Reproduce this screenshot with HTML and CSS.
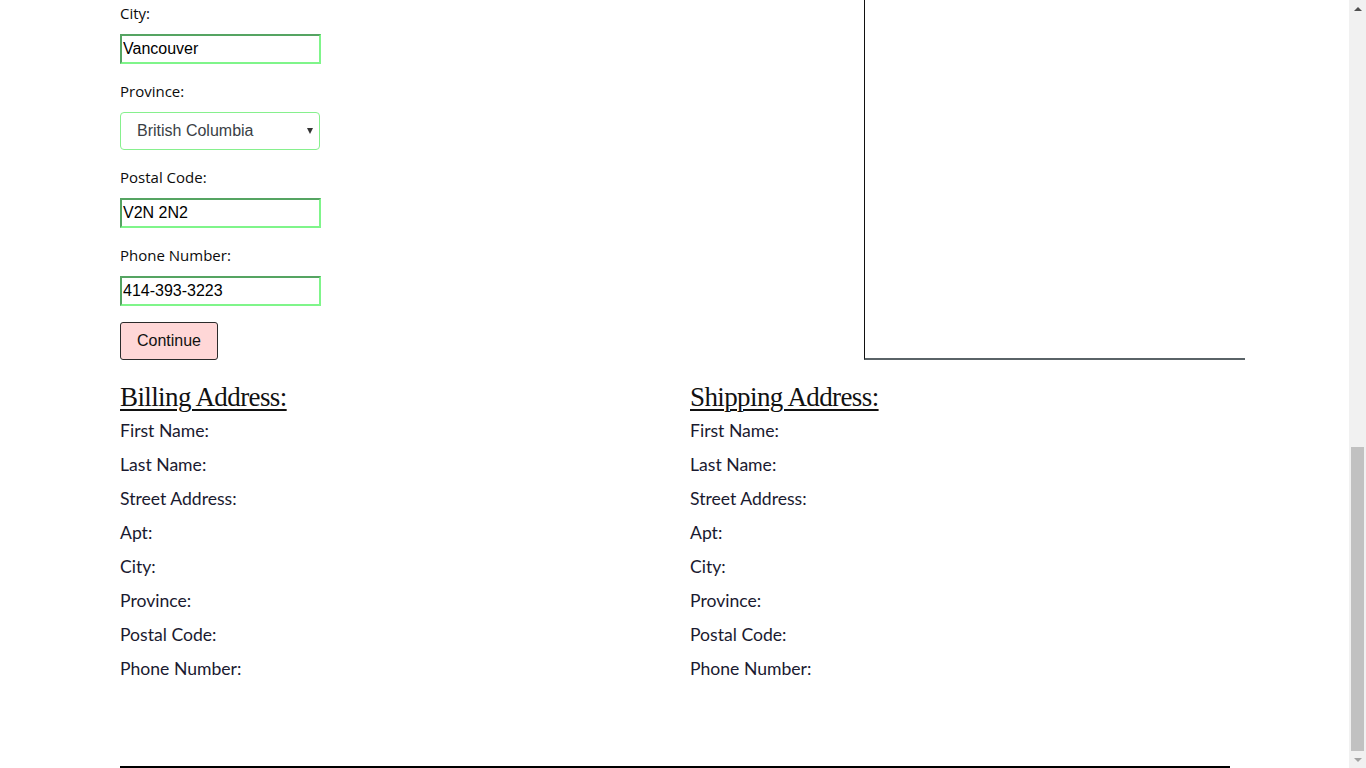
FILE: index.html
```html
<!DOCTYPE html>
<html lang="en">
<head>
<meta charset="utf-8">
<title>Checkout</title>
<link rel="stylesheet" href="styles.css">
</head>
<body>
<div class="window">
  <div class="page">
    <div class="top">
      <form class="form">
        <label class="field-label" for="city">City:</label>
        <input class="text-input" id="city" type="text" value="Vancouver">

        <label class="field-label" for="province">Province:</label>
        <span class="select-wrap">
          <select class="select" id="province">
            <option>British Columbia</option>
          </select>
        </span>

        <label class="field-label" for="postal">Postal Code:</label>
        <input class="text-input" id="postal" type="text" value="V2N 2N2">

        <label class="field-label" for="phone">Phone Number:</label>
        <input class="text-input" id="phone" type="text" value="414-393-3223">

        <button class="continue" type="button">Continue</button>
      </form>
      <div class="preview-box"></div>
    </div>

    <div class="addresses">
      <section class="address">
        <h2 class="address-title">Billing Address:</h2>
        <p class="address-row">First Name:</p>
        <p class="address-row">Last Name:</p>
        <p class="address-row">Street Address:</p>
        <p class="address-row">Apt:</p>
        <p class="address-row">City:</p>
        <p class="address-row">Province:</p>
        <p class="address-row">Postal Code:</p>
        <p class="address-row">Phone Number:</p>
      </section>
      <section class="address">
        <h2 class="address-title">Shipping Address:</h2>
        <p class="address-row">First Name:</p>
        <p class="address-row">Last Name:</p>
        <p class="address-row">Street Address:</p>
        <p class="address-row">Apt:</p>
        <p class="address-row">City:</p>
        <p class="address-row">Province:</p>
        <p class="address-row">Postal Code:</p>
        <p class="address-row">Phone Number:</p>
      </section>
    </div>

    <div class="rule"></div>
  </div>

  <div class="scrollbar" aria-hidden="true">
    <div class="sb-btn sb-up"><span class="tri-up"></span></div>
    <div class="sb-track">
      <div class="sb-thumb"></div>
    </div>
    <div class="sb-btn sb-down"><span class="tri-down"></span></div>
  </div>
</div>
</body>
</html>
```

FILE: styles.css
```css
html, body {
  margin: 0;
  padding: 0;
  height: 100%;
  overflow: hidden;
  background: #ffffff;
}

.window {
  display: flex;
  height: 768px;
  width: 1366px;
}

.page {
  width: 1349px;
  min-width: 0;
  flex-shrink: 0;
  padding-left: 120px;
  box-sizing: border-box;
  display: flex;
  flex-direction: column;
  overflow: hidden;
}

.top {
  display: flex;
  align-items: flex-start;
}

.form {
  width: 744px;
  flex-shrink: 0;
  padding-top: 3px;
  display: flex;
  flex-direction: column;
  align-items: flex-start;
}

.field-label {
  display: block;
  font-family: "Open Sans", "Noto Sans", sans-serif;
  font-size: 15px;
  line-height: 20px;
  color: #0c0c0c;
  margin-bottom: 11px;
  padding-top: 1px;
  margin-top: -1px;
}

.text-input {
  box-sizing: border-box;
  width: 201px;
  height: 30px;
  margin: 0 0 17px 0;
  padding: 0 1px;
  border-width: 2px;
  border-style: solid;
  border-color: #55a462 #7ff58a #7ff58a #55a462;
  font-family: "Liberation Sans", Arial, sans-serif;
  font-size: 16px;
  color: #000;
  background: #fff;
  outline: none;
}

.select-wrap {
  position: relative;
  display: block;
  width: 200px;
  height: 38px;
  margin-bottom: 17px;
}

.select-wrap::after {
  content: "";
  position: absolute;
  right: 7px;
  top: 16px;
  border-left: 3px solid transparent;
  border-right: 3px solid transparent;
  border-top: 6px solid #333;
  pointer-events: none;
}

.select {
  appearance: none;
  -webkit-appearance: none;
  box-sizing: border-box;
  width: 200px;
  height: 38px;
  border: 1px solid #86f08d;
  border-radius: 4px;
  background: #fff;
  padding: 0 0 1px 16px;
  font-family: "Liberation Sans", Arial, sans-serif;
  font-size: 16px;
  color: #3a3f46;
  outline: none;
}

.continue {
  box-sizing: border-box;
  width: 98px;
  height: 38px;
  margin-top: -1px;
  border: 1px solid #2b2b2b;
  border-radius: 3px;
  background: #ffd7d7;
  font-family: "Liberation Sans", Arial, sans-serif;
  font-size: 16px;
  color: #111;
  padding: 0;
}

.preview-box {
  box-sizing: border-box;
  width: 381px;
  height: 360px;
  border-left: 1px solid #111;
  border-bottom: 2px solid #5a6367;
  flex-shrink: 0;
}

.addresses {
  display: grid;
  grid-template-columns: 540px 540px;
  column-gap: 30px;
  margin-top: 21px;
}

.address-title {
  margin: 0;
  font-family: "Liberation Serif", "Times New Roman", serif;
  font-weight: normal;
  font-size: 27px;
  letter-spacing: -0.6px;
  line-height: 33px;
  color: #111;
  text-decoration: underline;
  text-decoration-thickness: 2px;
  text-underline-offset: 3px;
}

.address-row {
  margin: 0;
  font-family: Lato, "Noto Sans", sans-serif;
  font-size: 17.6px;
  line-height: 34px;
  color: #1a1a30;
}

.rule {
  margin-top: 80px;
  height: 3px;
  background: #000;
  width: 1110px;
}

.scrollbar {
  width: 17px;
  flex-shrink: 0;
  background: #f1f1f1;
  display: flex;
  flex-direction: column;
}

.sb-btn {
  height: 17px;
  display: flex;
  align-items: center;
  justify-content: center;
}

.tri-up {
  width: 0;
  height: 0;
  border-left: 4px solid transparent;
  border-right: 4px solid transparent;
  border-bottom: 4px solid #505050;
}

.tri-down {
  width: 0;
  height: 0;
  border-left: 4px solid transparent;
  border-right: 4px solid transparent;
  border-top: 4px solid #a3a3a3;
}

.sb-track {
  flex: 1;
  display: flex;
  flex-direction: column;
  justify-content: flex-end;
  padding: 0 2px;
}

.sb-thumb {
  height: 304px;
  background: #c1c1c1;
}
```
